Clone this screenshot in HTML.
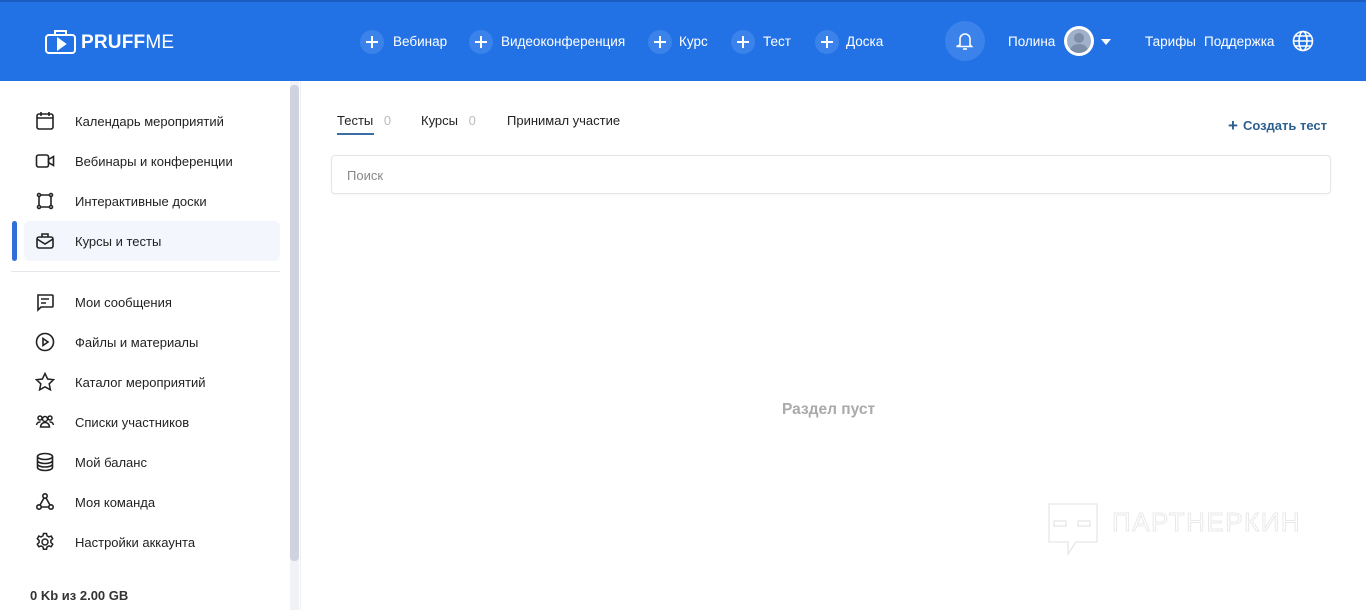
<!DOCTYPE html>
<html><head><meta charset="utf-8"><style>
*{box-sizing:border-box;margin:0;padding:0}
body{width:1366px;height:610px;overflow:hidden;background:#fff;font-family:"Liberation Sans","Noto Sans CJK SC",sans-serif;color:#222;position:relative}
.hdr{position:absolute;left:0;top:0;width:1366px;height:81px;background:#2272e6;border-top:2px solid #1a5cc0;color:#fff}
.hdr .t{position:absolute;top:32px;font-size:13.5px;color:#fff}
.pl{position:absolute;top:28px;width:24px;height:24px;border-radius:50%;background:#3b83ea}
.pl:before{content:"";position:absolute;left:6px;top:11px;width:12px;height:2.4px;background:#fff}
.pl:after{content:"";position:absolute;left:10.8px;top:6px;width:2.4px;height:12px;background:#fff}
.side{position:absolute;left:0;top:81px;width:290px;height:529px}
.it{position:absolute;left:75px;font-size:13px;color:#222}
.ic{position:absolute;left:35px;width:20px;height:20px}
.sb{position:absolute;left:290px;top:85px;width:9px;height:476px;background:#d0d3df;border-radius:4px}
.sbt{position:absolute;left:290px;top:81px;width:9px;height:529px;background:#f1f2f5}
.main{position:absolute;left:300px;top:81px;width:1066px;height:529px;border-left:1px solid #eceef2}
</style></head><body>
<div class="hdr">
 <svg style="position:absolute;left:45px;top:27px" width="32" height="26" viewBox="0 0 32 26" fill="none" stroke="#fff" stroke-width="2"><rect x="1" y="6" width="29" height="18" rx="3"/><path d="M10 6V2h11v4"/><path d="M13 10l7 5-7 5z" fill="#fff"/></svg>
 <div style="position:absolute;left:81px;top:30px;font-size:19px;letter-spacing:0.2px"><b>PRUFF</b><span style="font-weight:300">ME</span></div>
 <div class="pl" style="left:360px"></div><div class="t" style="left:393px">Вебинар</div>
 <div class="pl" style="left:469px"></div><div class="t" style="left:501px">Видеоконференция</div>
 <div class="pl" style="left:648px"></div><div class="t" style="left:679px">Курс</div>
 <div class="pl" style="left:731px"></div><div class="t" style="left:763px">Тест</div>
 <div class="pl" style="left:815px"></div><div class="t" style="left:846px">Доска</div>
 <div style="position:absolute;left:945px;top:19px;width:40px;height:40px;border-radius:50%;background:#3b83ea"></div>
 <svg style="position:absolute;left:956px;top:29px" width="18" height="20" viewBox="0 0 18 20" fill="none" stroke="#fff" stroke-width="1.6"><path d="M4 14V8a5 5 0 0 1 10 0v6l1.5 1.5h-15z"/><path d="M7 18h4"/></svg>
 <div class="t" style="left:1008px">Полина</div>
 <div style="position:absolute;left:1064px;top:24px;width:30px;height:30px;border-radius:50%;background:#fff;padding:3px"><div style="width:24px;height:24px;border-radius:50%;background:#9fb0c8;position:relative;overflow:hidden"><div style="position:absolute;left:7px;top:4px;width:10px;height:10px;border-radius:50%;background:#7d8ea8"></div><div style="position:absolute;left:3px;top:15px;width:18px;height:14px;border-radius:50%;background:#7d8ea8"></div></div></div>
 <div style="position:absolute;left:1101px;top:37px;border-left:5px solid transparent;border-right:5px solid transparent;border-top:6px solid #fff"></div>
 <div class="t" style="left:1145px">Тарифы</div>
 <div class="t" style="left:1204px">Поддержка</div>
 <svg style="position:absolute;left:1292px;top:28px" width="22" height="22" viewBox="0 0 22 22" fill="none" stroke="#fff" stroke-width="1.6"><circle cx="11" cy="11" r="9.5"/><ellipse cx="11" cy="11" rx="4" ry="9.5"/><path d="M1.5 11h19M3 6h16M3 16h16"/></svg>
</div>
<div class="side">
 <div style="position:absolute;left:24px;top:140px;width:256px;height:40px;background:#f3f6fd;border-radius:6px"></div>
 <div style="position:absolute;left:12px;top:140px;width:5px;height:40px;background:#2f6fd6;border-radius:3px"></div>
 <div style="position:absolute;left:11px;top:190px;width:269px;height:1px;background:#e4e6eb"></div>
 <svg class="ic" style="top:30px" viewBox="0 0 20 20" fill="none" stroke="#222" stroke-width="1.6"><rect x="2" y="3" width="16" height="15" rx="2"/><path d="M2 7h16M6 1v4M14 1v4"/></svg>
 <div class="it" style="top:33px">Календарь мероприятий</div>
 <svg class="ic" style="top:70px" viewBox="0 0 20 20" fill="none" stroke="#222" stroke-width="1.6"><rect x="1.5" y="4" width="12" height="12" rx="2"/><path d="M13.5 8.5l5-3v9l-5-3z"/></svg>
 <div class="it" style="top:73px">Вебинары и конференции</div>
 <svg class="ic" style="top:110px" viewBox="0 0 20 20" fill="none" stroke="#222" stroke-width="1.6"><path d="M4 2v16M16 2v16M2 4h16M2 16h16"/><circle cx="4" cy="4" r="1.5" fill="#fff"/><circle cx="16" cy="4" r="1.5" fill="#fff"/><circle cx="4" cy="16" r="1.5" fill="#fff"/><circle cx="16" cy="16" r="1.5" fill="#fff"/></svg>
 <div class="it" style="top:113px">Интерактивные доски</div>
 <svg class="ic" style="top:150px" viewBox="0 0 20 20" fill="none" stroke="#222" stroke-width="1.6"><rect x="2" y="6" width="16" height="11" rx="2"/><path d="M7 6V3h6v3M2 8l8 5 8-5"/></svg>
 <div class="it" style="top:153px">Курсы и тесты</div>
 <svg class="ic" style="top:211px" viewBox="0 0 20 20" fill="none" stroke="#222" stroke-width="1.6"><path d="M3 3h14a1 1 0 0 1 1 1v10a1 1 0 0 1-1 1H6l-3 3z"/><path d="M6 7h8M6 11h5"/></svg>
 <div class="it" style="top:214px">Мои сообщения</div>
 <svg class="ic" style="top:251px" viewBox="0 0 20 20" fill="none" stroke="#222" stroke-width="1.6"><circle cx="10" cy="10" r="8.5"/><path d="M8 6.5l5 3.5-5 3.5z"/></svg>
 <div class="it" style="top:254px">Файлы и материалы</div>
 <svg class="ic" style="top:291px" viewBox="0 0 20 20" fill="none" stroke="#222" stroke-width="1.5"><path d="M10 1.5l2.6 5.5 6 .7-4.4 4.1 1.2 6-5.4-3-5.4 3 1.2-6L1.4 7.7l6-.7z"/></svg>
 <div class="it" style="top:294px">Каталог мероприятий</div>
 <svg class="ic" style="top:331px" viewBox="0 0 20 20" fill="none" stroke="#222" stroke-width="1.5"><circle cx="10" cy="7" r="2.5"/><circle cx="5" cy="6" r="2"/><circle cx="15" cy="6" r="2"/><path d="M5.5 15a4.5 4.5 0 0 1 9 0zM1.5 13a3.5 3.5 0 0 1 4-3M18.5 13a3.5 3.5 0 0 0-4-3"/></svg>
 <div class="it" style="top:334px">Списки участников</div>
 <svg class="ic" style="top:371px" viewBox="0 0 20 20" fill="none" stroke="#222" stroke-width="1.6"><ellipse cx="10" cy="4.5" rx="7.5" ry="3"/><path d="M2.5 4.5v11c0 1.7 3.4 3 7.5 3s7.5-1.3 7.5-3v-11M2.5 8.5c0 1.7 3.4 3 7.5 3s7.5-1.3 7.5-3M2.5 12c0 1.7 3.4 3 7.5 3s7.5-1.3 7.5-3"/></svg>
 <div class="it" style="top:374px">Мой баланс</div>
 <svg class="ic" style="top:411px" viewBox="0 0 20 20" fill="none" stroke="#222" stroke-width="1.6"><circle cx="10" cy="4" r="2.2"/><circle cx="4" cy="15" r="2.2"/><circle cx="16" cy="15" r="2.2"/><path d="M9 6l-4 7M11 6l4 7M6.2 15h7.6"/></svg>
 <div class="it" style="top:414px">Моя команда</div>
 <svg class="ic" style="top:451px" viewBox="0 0 20 20" fill="none" stroke="#222" stroke-width="1.5"><circle cx="10" cy="10" r="3"/><path d="M8.5 1.5h3l.5 2.3 2 1.1 2.2-.8 1.5 2.6-1.8 1.6v2.2l1.8 1.6-1.5 2.6-2.2-.8-2 1.1-.5 2.3h-3l-.5-2.3-2-1.1-2.2.8-1.5-2.6 1.8-1.6V8.3L2.3 6.7l1.5-2.6 2.2.8 2-1.1z"/></svg>
 <div class="it" style="top:454px">Настройки аккаунта</div>
 <div style="position:absolute;left:30px;top:507px;font-size:13px;font-weight:bold;color:#333">0 Kb из 2.00 GB</div>
</div>
<div class="sbt"></div><div class="sb"></div>
<div class="main">
 <div style="position:absolute;left:36px;top:32px;font-size:13px">Тесты <span style="color:#bbb;margin-left:7px">0</span></div>
 <div style="position:absolute;left:36px;top:52px;width:37px;height:2px;background:#3a6ea5"></div>
 <div style="position:absolute;left:120px;top:32px;font-size:13px">Курсы <span style="color:#bbb;margin-left:7px">0</span></div>
 <div style="position:absolute;left:206px;top:32px;font-size:13px">Принимал участие</div>
 <div style="position:absolute;left:927px;top:34px;font-size:13px;font-weight:bold;color:#2d5f8f"><span style="font-size:17px;margin-right:5px;position:relative;top:1px">+</span>Создать тест</div>
 <div style="position:absolute;left:30px;top:74px;width:1000px;height:39px;border:1px solid #e3e5e9;border-radius:4px;box-shadow:0 1px 2px rgba(0,0,0,.04)"></div>
 <div style="position:absolute;left:46px;top:87px;font-size:13px;color:#888">Поиск</div>
 <div style="position:absolute;left:481px;top:320px;font-size:15.5px;font-weight:bold;color:#aaa">Раздел пуст</div>
 <svg style="position:absolute;left:745px;top:420px" width="55" height="58" viewBox="0 0 55 58" fill="none" stroke="#e6e6e6" stroke-width="1.3"><path d="M3 3h48v38H30l-8 12V41H3z"/><rect x="8" y="20" width="12" height="5"/><rect x="32" y="20" width="12" height="5"/></svg>
 <div style="position:absolute;left:811px;top:426px;font-size:26px;color:#fff;-webkit-text-stroke:0.8px #e4e4e4;letter-spacing:1.5px">ПАРТНЕРКИН</div>
</div>
</body></html>
